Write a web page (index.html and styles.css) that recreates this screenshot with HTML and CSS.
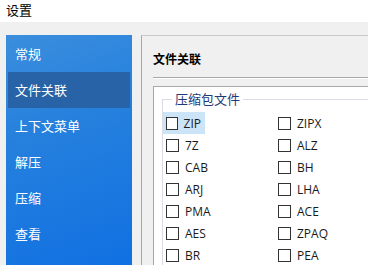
FILE: index.html
```html
<!DOCTYPE html>
<html>
<head>
    <meta charset="UTF-8">
    <title>设置</title>
    <link rel="stylesheet" href="styles.css">
</head>
<body>

<div class="titlebar">设置</div>

<div class="main">
    <ul class="sidebar">
        <li>常规</li>
        <li class="active">文件关联</li>
        <li>上下文菜单</li>
        <li>解压</li>
        <li>压缩</li>
        <li>查看</li>
    </ul>

    <div class="panel">
        <h2 class="heading">文件关联</h2>
        <div class="sheet">
            <fieldset class="group">
                <legend>压缩包文件</legend>
                <div class="grid">
                    <label class="check hover"><span class="box"></span>ZIP</label>
                    <label class="check"><span class="box"></span>ZIPX</label>
                    <label class="check"><span class="box"></span>7Z</label>
                    <label class="check"><span class="box"></span>ALZ</label>
                    <label class="check"><span class="box"></span>CAB</label>
                    <label class="check"><span class="box"></span>BH</label>
                    <label class="check"><span class="box"></span>ARJ</label>
                    <label class="check"><span class="box"></span>LHA</label>
                    <label class="check"><span class="box"></span>PMA</label>
                    <label class="check"><span class="box"></span>ACE</label>
                    <label class="check"><span class="box"></span>AES</label>
                    <label class="check"><span class="box"></span>ZPAQ</label>
                    <label class="check"><span class="box"></span>BR</label>
                    <label class="check"><span class="box"></span>PEA</label>
                </div>
            </fieldset>
        </div>
    </div>
</div>

</body>
</html>
```

FILE: styles.css
```css
html, body {
    margin: 0;
    height: 100%;
    overflow: hidden;
}

body {
    background: #f0f0f0;
    font-family: "Noto Sans CJK SC", "Noto Sans", sans-serif;
    color: #000;
}

.titlebar {
    height: 22px;
    line-height: 20px;
    padding-left: 6px;
    background: #fff;
    font-size: 13px;
}

.main {
    display: flex;
    height: 243px;
    padding: 13px 0 0 6px;
    box-sizing: border-box;
}

.sidebar {
    list-style: none;
    margin: 0 9px 0 0;
    padding: 1px 2px 0;
    width: 126px;
    box-sizing: border-box;
    background: linear-gradient(160deg, #3b8edd 0%, #2580dd 40%, #1170e2 100%);
}

.sidebar li {
    height: 36px;
    line-height: 36px;
    padding-left: 7px;
    font-size: 13px;
    color: #fff;
}

.sidebar li.active {
    background: #2763a6;
}

.panel {
    flex: 1;
    display: flex;
    flex-direction: column;
    min-height: 0;
    border-left: 1px solid #a8a8a8;
    border-top: 1px solid #c8c8c8;
    padding: 12px 0 0 11px;
}

.heading {
    margin: 0;
    font-size: 12px;
    font-weight: bold;
    line-height: 22px;
    padding-bottom: 7px;
    border-bottom: 1px solid #a8a8a8;
    box-shadow: 0 1px 0 #fff;
}

.sheet {
    flex: 1;
    min-height: 0;
    overflow: hidden;
    margin-top: 8px;
    background: #fff;
    border-left: 1px solid #a8a8a8;
    border-top: 1px solid #a8a8a8;
    padding: 5px 0 0 8px;
}

.group {
    margin: 0;
    padding: 6px 0 0 0;
    border: 1px solid #dcdce6;
    border-right: none;
    border-bottom: none;
}

.group legend {
    padding: 0 3px;
    margin-left: 9px;
    font-size: 13px;
    line-height: 14px;
    color: #1e3a78;
}

.grid {
    display: grid;
    grid-template-columns: 112px 80px;
}

.check {
    display: flex;
    align-items: center;
    height: 22px;
    width: max-content;
    padding: 0 4px 0 0;
    font-family: "Open Sans", "Noto Sans", sans-serif;
    font-size: 12px;
    color: #1a1a1a;
}

.check.hover {
    background: #cce4f7;
    width: 38px;
}

.box {
    width: 11px;
    height: 11px;
    border: 1px solid #333;
    margin: 0 6px 0 3px;
    background: #fff;
}
```
